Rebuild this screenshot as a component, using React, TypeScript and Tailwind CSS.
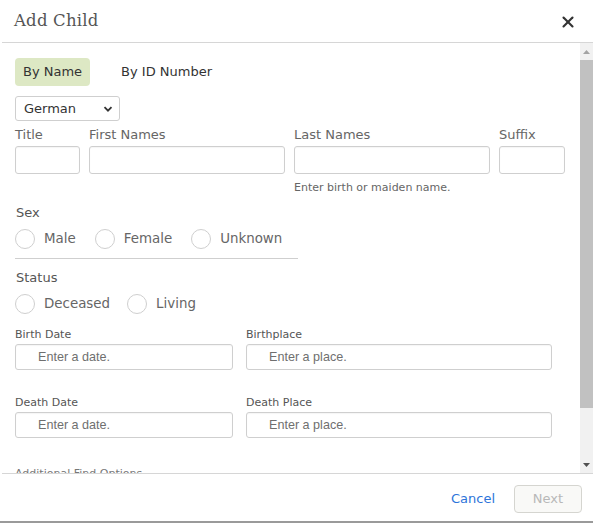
import { X } from "lucide-react";

function Radio({ label }: { label: string }) {
  return (
    <label className="flex items-center gap-[9px]">
      <span className="h-[20px] w-[20px] rounded-full border border-[#cfcfcf] bg-white" />
      <span className="text-[13.4px] text-[#666]">{label}</span>
    </label>
  );
}

function TextBox({ w, placeholder }: { w: string; placeholder?: string }) {
  return (
    <div className={`${w} h-full rounded-[3px] border border-[#cfcfcf] bg-white shadow-[inset_0_1px_1px_rgba(0,0,0,0.04)] flex items-center pl-[22px]`}>
      {placeholder && (
        <span className="font-['Liberation_Sans',Arial,sans-serif] text-[12.6px] text-[#6f6f6f]">{placeholder}</span>
      )}
    </div>
  );
}

export default function App() {
  return (
    <div className="w-[593px] h-[523px] bg-white flex flex-col font-['DejaVu_Sans',Verdana,sans-serif] overflow-hidden">
      {/* header */}
      <div className="h-[43px] shrink-0 flex items-center justify-between pl-[14px] pr-[16px] border-b border-[#d6d6d6] ml-[2px]">
        <h1 className="-ml-[2px] font-['DejaVu_Serif',serif] text-[16.5px] text-[#555] tracking-[0.2px]">Add Child</h1>
        <X size={18} strokeWidth={2.8} className="text-[#333] mt-[2px]" />
      </div>

      {/* body */}
      <div className="h-[430px] shrink-0 flex">
        <div className="flex-1 overflow-hidden pl-[15px]">
          <div className="pt-[15px] flex items-center h-[43px]">
            <button className="h-[28px] px-[8px] rounded-[4px] bg-[#dde8c4] text-[13px] text-[#333]">By Name</button>
            <span className="ml-[31px] text-[13px] text-[#333]">By ID Number</span>
          </div>

          <div className="mt-[10px] w-[105px] h-[25px] rounded-[3px] border border-[#cfcfcf] flex items-center justify-between pl-[8px] pr-[6px]">
            <span className="text-[13px] text-[#333]">German</span>
            <svg width="10" height="10" viewBox="0 0 10 10">
              <path d="M1.5 3.2 L5 6.7 L8.5 3.2" fill="none" stroke="#333" strokeWidth="1.8" />
            </svg>
          </div>

          <div className="mt-[6px] flex gap-[9px] text-[13px] text-[#666] leading-[16px]">
            <span className="w-[65px]">Title</span>
            <span className="w-[196px]">First Names</span>
            <span className="w-[196px]">Last Names</span>
            <span className="w-[66px]">Suffix</span>
          </div>
          <div className="mt-[3px] h-[28px] flex gap-[9px]">
            <TextBox w="w-[65px]" />
            <TextBox w="w-[196px]" />
            <TextBox w="w-[196px]" />
            <TextBox w="w-[66px]" />
          </div>
          <div className="mt-[7px] pl-[279px] text-[11px] leading-[14px] text-[#666]">Enter birth or maiden name.</div>

          <div className="mt-[10px] pl-[1px] text-[13px] leading-[16px] text-[#555]">Sex</div>
          <div className="mt-[8px] flex gap-[19px]">
            <Radio label="Male" />
            <Radio label="Female" />
            <Radio label="Unknown" />
          </div>
          <div className="mt-[9px] w-[283px] border-t border-[#cfcfcf]" />

          <div className="mt-[11px] pl-[1px] text-[13px] leading-[16px] text-[#555]">Status</div>
          <div className="mt-[8px] flex gap-[17px]">
            <Radio label="Deceased" />
            <Radio label="Living" />
          </div>

          <div className="mt-[14px] flex gap-[13px] text-[11px] leading-[14px] text-[#555]">
            <span className="w-[218px]">Birth Date</span>
            <span>Birthplace</span>
          </div>
          <div className="mt-[2px] h-[26px] flex gap-[13px]">
            <TextBox w="w-[218px]" placeholder="Enter a date." />
            <TextBox w="w-[306px]" placeholder="Enter a place." />
          </div>

          <div className="mt-[26px] flex gap-[13px] text-[11px] leading-[14px] text-[#555]">
            <span className="w-[218px]">Death Date</span>
            <span>Death Place</span>
          </div>
          <div className="mt-[2px] h-[26px] flex gap-[13px]">
            <TextBox w="w-[218px]" placeholder="Enter a date." />
            <TextBox w="w-[306px]" placeholder="Enter a place." />
          </div>

          <div className="mt-[29px] text-[11px] leading-[14px] text-[#777]">Additional Find Options</div>
        </div>

        {/* scrollbar */}
        <div className="w-[13px] bg-[#f1f1f1] flex flex-col items-stretch">
          <div className="h-[17px] flex items-center justify-center">
            <svg width="7" height="4" viewBox="0 0 7 4"><path d="M0 4 L3.5 0 L7 4 Z" fill="#a3a3a3" /></svg>
          </div>
          <div className="h-[348px] bg-[#c1c1c1]" />
          <div className="flex-1 flex items-end justify-center pb-[6px]">
            <svg width="7" height="4" viewBox="0 0 7 4"><path d="M0 0 L7 0 L3.5 4 Z" fill="#505050" /></svg>
          </div>
        </div>
      </div>

      {/* footer */}
      <div className="h-[48px] shrink-0 border-t border-[#d6d6d6] ml-[2px] flex items-center justify-end pr-[11px] gap-[19px]">
        <span className="text-[13px] text-[#2d74da] mt-[2px]">Cancel</span>
        <button className="w-[68px] h-[28px] mt-[2px] rounded-[4px] border border-[#d5d5d0] bg-[#f9f9f7] text-[13px] text-[#b8b8b8]">Next</button>
      </div>
      <div className="border-t-2 border-[#9a9a9a]" />
    </div>
  );
}
